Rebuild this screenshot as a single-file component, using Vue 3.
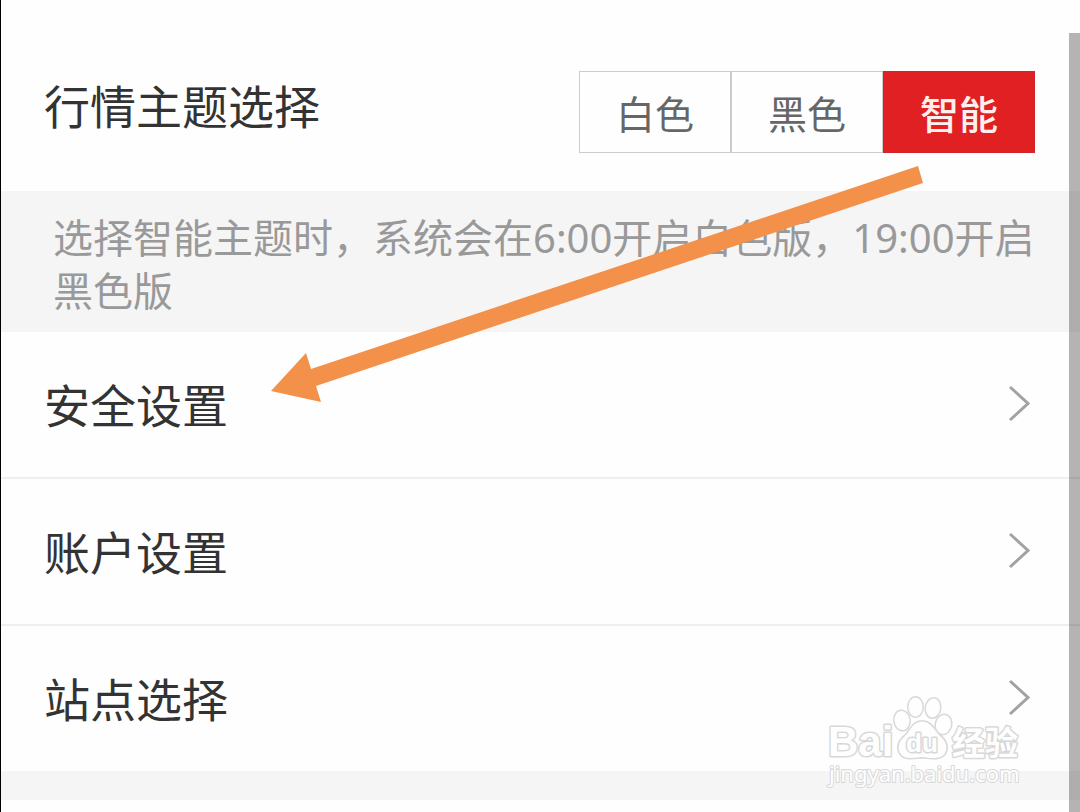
<script setup>
import { ref } from 'vue'

const themes = ['白色', '黑色', '智能']
const active = ref('智能')
const rows = ['安全设置', '账户设置', '站点选择']
</script>

<template>
  <main class="page">
    <section class="theme">
      <h1 class="label">行情主题选择</h1>
      <div class="segments" role="group" aria-label="行情主题选择">
        <button
          v-for="t in themes"
          :key="t"
          type="button"
          class="segment"
          :class="{ active: t === active }"
          :aria-pressed="t === active"
          @click="active = t"
        >{{ t }}</button>
      </div>
    </section>

    <p class="note">选择智能主题时，系统会在6:00开启白色版，19:00开启黑色版</p>

    <nav class="rows">
      <a v-for="r in rows" :key="r" class="row" href="#">
        <span class="label">{{ r }}</span>
        <svg class="chevron" width="24" height="42" viewBox="0 0 24 42" aria-hidden="true">
          <path d="M2 3 L20 19.500 L2 36" />
        </svg>
      </a>
    </nav>
    <div class="band"></div>

    <svg class="arrow" width="654" height="240" viewBox="270 164 654 240" aria-hidden="true">
      <polygon points="271,391 306,353 311,369 918,166 923,183 316,386 321,402" />
    </svg>

    <svg class="watermark" width="204" height="100" viewBox="824 692 204 100" aria-hidden="true">
      <g class="outline">
        <text class="brand" x="828" y="756">Bai</text>
        <ellipse cx="902" cy="720.500" rx="7.500" ry="9.500" transform="rotate(-8 902 720.500)" />
        <ellipse cx="915.500" cy="707" rx="7" ry="9.500" />
        <ellipse cx="933" cy="708" rx="7" ry="9.500" transform="rotate(8 933 708)" />
        <ellipse cx="943.500" cy="724.500" rx="7.500" ry="9.500" transform="rotate(12 943.500 724.500)" />
        <path d="M922 721.500 C931 721.500 934 730 940 736 C946 741 948 747 945 753 C941 760 931 758 922 757 C913 758 904 760 900 753 C897 747 899 741 905 736 C911 730 913 721.500 922 721.500 Z" />
        <text class="du" x="906" y="752">du</text>
        <text class="cjk" x="952" y="755">经验</text>
        <text class="url" x="829" y="782">jingyan.baidu.com</text>
      </g>
    </svg>

    <div class="scrollbar"></div>
  </main>
</template>

<style>
body {
  margin: 0;
  background: #fefefe;
}
</style>

<style scoped>
.page {
  position: relative;
  box-sizing: border-box;
  min-height: 100vh;
  border-left: 1px solid #000;
  background: #fefefe;
  font-family: "Noto Sans", "Noto Sans CJK SC", sans-serif;
  overflow: hidden;
}
.theme {
  display: flex;
  justify-content: space-between;
  align-items: flex-start;
  padding: 71px 45px 38px 43px;
}
.label {
  margin: 0;
  font-size: 46px;
  line-height: 70px;
  font-weight: 400;
  color: #333;
}
.segments {
  display: flex;
}
.segment {
  box-sizing: border-box;
  width: 152px;
  height: 82px;
  padding: 4px 0 0;
  border: 1px solid #ccc;
  border-radius: 0;
  background: #fefefe;
  color: #666;
  font-family: inherit;
  font-size: 39px;
  line-height: 76px;
  text-align: center;
  cursor: pointer;
}
.segment.active {
  border-color: #d0262a;
  background: #e02023;
  color: #fff0ee;
  font-weight: 500;
}
.note {
  margin: 0;
  padding: 20px 36px 15px 52px;
  background: #f5f5f5;
  color: #999;
  font-size: 40px;
  line-height: 53px;
}
.row {
  display: flex;
  justify-content: space-between;
  align-items: center;
  height: 145px;
  padding: 0 48px 0 43px;
  text-decoration: none;
}
.row + .row {
  border-top: 2px solid #efefef;
}
.chevron {
  fill: none;
  stroke: #a0a2a4;
  stroke-width: 3;
}
.band {
  height: 29px;
  background: #f5f5f5;
}
.arrow {
  position: absolute;
  left: 269px;
  top: 164px;
  fill: #f3914a;
  pointer-events: none;
}
.watermark {
  position: absolute;
  right: 52px;
  bottom: 20px;
  pointer-events: none;
}
.outline {
  fill: #fefefe;
  stroke: #d8d8d8;
  stroke-width: 3;
  stroke-linejoin: round;
  paint-order: stroke;
}
.outline ellipse,
.outline path {
  stroke-width: 3;
}
.brand {
  font: bold 42px "Liberation Sans", sans-serif;
}
.du {
  font: bold 26px "Liberation Sans", sans-serif;
}
.cjk {
  font: bold 33px "Noto Sans CJK SC", sans-serif;
}
.url {
  font: 22px "Noto Sans", sans-serif;
  stroke-width: 2;
}
.scrollbar {
  position: absolute;
  top: 33px;
  right: 0;
  bottom: 0;
  width: 11px;
  background: rgba(0, 0, 0, 0.29);
}
</style>
